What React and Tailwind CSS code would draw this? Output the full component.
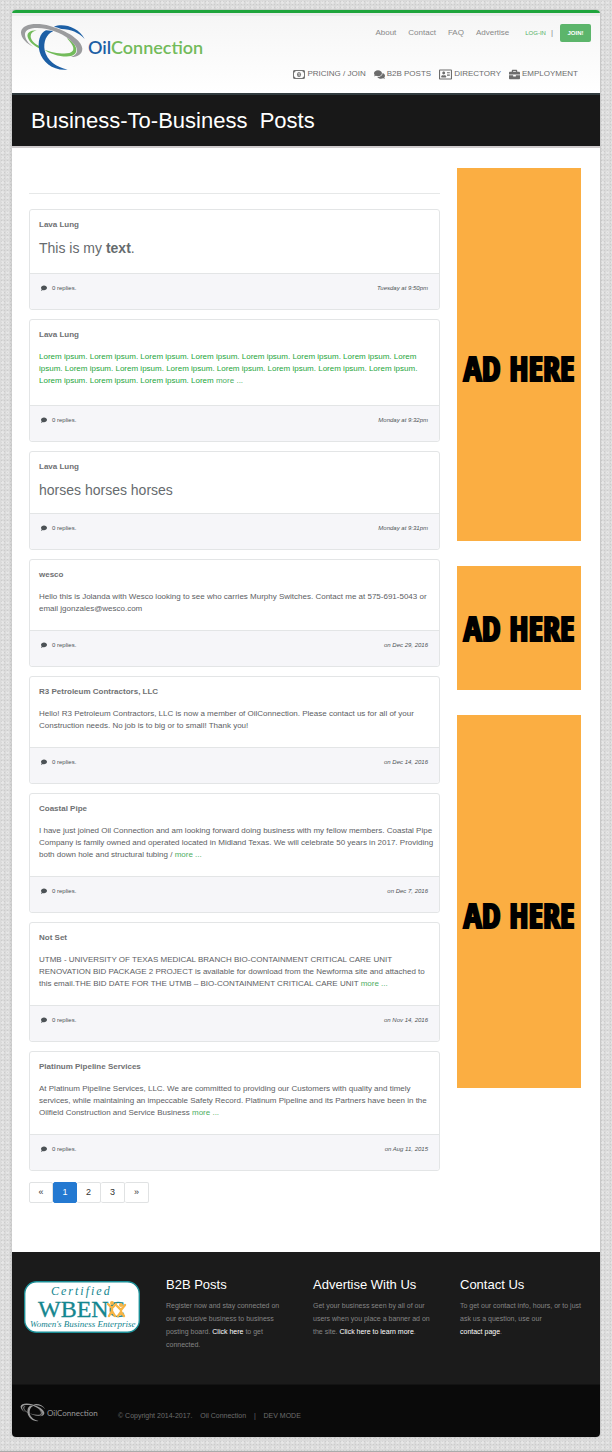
import React from "react";
import { FaComments, FaComment, FaBriefcase, FaRegAddressCard } from "react-icons/fa";

const cardText = "mt-[10px] text-[8px] leading-[12px]";

const posts = [
  { name: "Lava Lung", large: true, pad: "pb-4", date: "Tuesday at 9:50pm", body: <>This is my <b>text</b>.</> },
  {
    name: "Lava Lung", green: true, pad: "pb-[18px]", date: "Monday at 9:32pm", more: true,
    body: "Lorem ipsum. ".repeat(18) + "Lorem ",
  },
  { name: "Lava Lung", large: true, pad: "pb-[14px]", date: "Monday at 9:31pm", body: "horses horses horses" },
  { name: "wesco", date: "on Dec 29, 2016", body: "Hello this is Jolanda with Wesco looking to see who carries Murphy Switches. Contact me at 575-691-5043 or email jgonzales@wesco.com" },
  { name: "R3 Petroleum Contractors, LLC", date: "on Dec 14, 2016", body: "Hello! R3 Petroleum Contractors, LLC is now a member of OilConnection. Please contact us for all of your Construction needs. No job is to big or to small! Thank you!" },
  { name: "Coastal Pipe", date: "on Dec 7, 2016", more: true, body: "I have just joined Oil Connection and am looking forward doing business with my fellow members. Coastal Pipe Company is family owned and operated located in Midland Texas. We will celebrate 50 years in 2017. Providing both down hole and structural tubing / " },
  { name: "Not Set", date: "on Nov 14, 2016", more: true, body: "UTMB - UNIVERSITY OF TEXAS MEDICAL BRANCH BIO-CONTAINMENT CRITICAL CARE UNIT RENOVATION BID PACKAGE 2 PROJECT is available for download from the Newforma site and attached to this email.THE BID DATE FOR THE UTMB – BIO-CONTAINMENT CRITICAL CARE UNIT " },
  { name: "Platinum Pipeline Services", date: "on Aug 11, 2015", more: true, body: "At Platinum Pipeline Services, LLC. We are committed to providing our Customers with quality and timely services, while maintaining an impeccable Safety Record. Platinum Pipeline and its Partners have been in the Oilfield Construction and Service Business " },
];

function Swoosh({ blue, green, gray, className }) {
  return (
    <svg viewBox="60 68 198 147" className={className} aria-hidden="true">
      <path fill={green} d="M110 90C88 90 78 100 84 113C90 128 105 138 120 145L118 137C102 130 92 118 92 108C92 98 98 93 110 90Z" />
      <path fill={green} d="M134 148C150 162 190 172 213 167C240 160 232 130 200 113C222 135 228 152 208 158C190 162 155 157 134 148Z" />
      <path fill={gray} d="M100 139C80 130 62 112 63 95C66 70 110 66 150 77C200 90 246 120 247 145C247 160 235 170 213 170C232 163 236 150 225 135C205 108 170 92 140 86C110 80 78 82 75 100C74 115 84 130 100 139Z" />
      <path fill={blue} d="M138 90C120 97 111 125 119 155C128 185 160 213 203 208C170 202 140 180 134 150C130 125 138 102 160 92Z" />
      <path fill={blue} d="M162 79C190 68 235 80 254 116C235 95 212 88 185 86C178 84 170 80 162 79Z" />
    </svg>
  );
}

function MoneyIcon() {
  return (
    <svg viewBox="0 0 24 18" className="h-[9px] w-3" aria-hidden="true">
      <rect x="1" y="1" width="22" height="16" rx="1" fill="none" stroke="#777" strokeWidth="2" />
      <path fill="#777" d="M2 2h3a3 3 0 0 1-3 3zM22 2h-3a3 3 0 0 0 3 3zM2 16h3a3 3 0 0 0-3-3zM22 16h-3a3 3 0 0 1 3-3z" />
      <ellipse cx="12" cy="9" rx="4" ry="5" fill="#777" />
      <path d="M12.3 6v6M11 7.2l1.3-.9" stroke="#fff" strokeWidth="1.3" fill="none" />
    </svg>
  );
}

function Wbenc() {
  return (
    <svg viewBox="0 0 116 52" className="h-[52px] w-[116px]" role="img" aria-label="Certified WBENC Women's Business Enterprise">
      <rect x="0.7" y="0.7" width="114.6" height="50.6" rx="12" fill="#fff" stroke="#1b8e96" strokeWidth="1.4" />
      <g fill="#14868f" fontFamily="'Liberation Serif', serif">
        <text x="27" y="14" fontSize="12" fontStyle="italic" letterSpacing="2">Certified</text>
        <text x="14" y="36" fontSize="24" stroke="#14868f" strokeWidth="0.3">WBENC</text>
        <text x="6" y="46" fontSize="9" fontStyle="italic">Women's Business Enterprise</text>
      </g>
      <g stroke="#f7b445" strokeWidth="2.4" fill="none" strokeLinecap="round">
        <path d="M84 23l4 4 4-4M88 27v3l-3 5M88 30l3 5" />
        <path d="M93 25l4 4 4-5M97 29v2l-3 4M97 31l3 4" />
      </g>
      <circle cx="88" cy="22" r="2" fill="#f7b445" />
      <circle cx="97" cy="24" r="2" fill="#f7b445" />
    </svg>
  );
}

function Post({ post }) {
  return (
    <article className="rounded-[3px] border border-[#e3e5e6] bg-white">
      <div className={`pt-[9px] pr-1 pl-[9px] ${post.pad || "pb-[15px]"}`}>
        <h2 className="text-[8px] leading-[12px] font-bold text-[#6f7173]">{post.name}</h2>
        <p className={post.large ? "mt-2 text-[14px] leading-[18px] text-[#666b6e]" : post.green ? `${cardText} text-[#1da53a]` : `${cardText} text-[#5c6063]`}>
          {post.body}
          {post.more && <a href="#more" className="text-[#4cae61]">more ...</a>}
        </p>
      </div>
      <div className="flex justify-between rounded-b-[3px] border-t border-[#e3e5e6] bg-[#f6f6f9] px-[11px] pt-2 pb-[15px] text-[6px] leading-[12px] text-[#4c5256]">
        <span className="flex items-center gap-[5px]">
          <FaComment className="h-[6px] w-[6px]" /> 0 replies.
        </span>
        <time className="italic">{post.date}</time>
      </div>
    </article>
  );
}

function Ad({ tall }) {
  return (
    <a href="#ad" className={`flex items-center justify-center bg-[#fbae42] font-['Open_Sans_Condensed','Roboto_Condensed',sans-serif] text-[34px] font-black whitespace-nowrap text-black [-webkit-text-stroke:2px_black] ${tall ? "h-[373px] pt-[28px]" : "h-[124px]"}`}>
      AD HERE
    </a>
  );
}

const pages = ["«", "1", "2", "3", "»"];

export default function App() {
  return (
    <div className="border-b border-[#aaa] bg-[#dadada] bg-[radial-gradient(#00000012_1px,transparent_1px),radial-gradient(#ffffff55_1px,transparent_2px)] bg-size-[3px_3px,5px_5px] px-3 pt-[10px] pb-[14px] font-['Liberation_Sans',sans-serif]">
      <div className="overflow-hidden rounded-[4px] bg-white shadow-[0_0_2px_#0000004d]">
        <header className="flex min-h-[83px] justify-between border-t-[3px] border-[#1fa53c] bg-[linear-gradient(#ececec_3px,#f6f6f6_3px,#ffffff)]">
          <a href="#home" className="flex pt-[10px] pl-2" aria-label="OilConnection">
            <Swoosh blue="#1c5fa5" green="#73bb5b" gray="#9b9c9e" className="h-[49px] w-[66px]" />
            <span className="ml-[2px] pt-3 font-['Lato',sans-serif] text-[18px] leading-[24px] font-semibold text-[#73bb5b]"><span className="text-[#1c5fa5]">Oil</span>Connection</span>
          </a>
          <div className="flex flex-col items-end">
            <nav className="mt-[11px] mr-[9px] flex items-center text-[8px] leading-[18px] text-[#888]">
              <a href="#about" className="mr-3">About</a>
              <a href="#contact" className="mr-3">Contact</a>
              <a href="#faq" className="mr-3">FAQ</a>
              <a href="#advertise" className="mr-4">Advertise</a>
              <a href="#login" className="mr-[5px] text-[6px] text-[#52b063]">LOG-IN</a>
              <span className="mr-[7px]">|</span>
              <a href="#join" className="w-[31px] rounded-[2px] bg-[#5cb56b] text-center text-[6px] font-bold text-white">JOIN!</a>
            </nav>
            <nav className="mt-[23px] mr-[22px] flex gap-2 text-[8px] leading-[18px] text-[#6c6c6c]">
              <a href="#pricing" className="flex items-center gap-[2px]"><MoneyIcon />PRICING / JOIN</a>
              <a href="#posts" className="flex items-center gap-[2px]"><FaComments className="h-[11px] w-[11px]" />B2B POSTS</a>
              <a href="#directory" className="flex items-center gap-[2px]"><FaRegAddressCard className="h-[13px] w-[13px]" />DIRECTORY</a>
              <a href="#employment" className="flex items-center gap-[2px]"><FaBriefcase className="h-[11px] w-[11px]" />EMPLOYMENT</a>
            </nav>
          </div>
        </header>

        <div className="border-t-2 border-b-2 border-t-[#313b3f] border-b-[#cfcbcd] bg-[#181818] px-[19px] pt-[11px] pb-[11px]">
          <h1 className="text-[22px] leading-[29px] whitespace-pre text-white">Business-To-Business  Posts</h1>
        </div>

        <main className="flex gap-[17px] pr-[19px] pb-[49px] pl-[17px]">
          <section className="min-w-0 flex-1 pt-[45px]">
            <hr className="mb-[15px] border-[#e6e8e8]" />
            <div className="flex flex-col gap-[9px]">
              {posts.map((p, i) => <Post key={i} post={p} />)}
            </div>
            <nav aria-label="Pages" className="mt-[11px] flex text-[9px] leading-[19px] text-[#333]">
              {pages.map((p) => (
                <a key={p} href={`#page-${p}`} className={p === "1" ? "w-6 rounded-[2px] border border-[#2479d1] bg-[#2479d1] text-center text-white" : "w-6 rounded-[2px] border border-l-0 border-[#e0e2e3] text-center first:border-l"}>{p}</a>
              ))}
            </nav>
          </section>
          <aside className="flex w-[124px] flex-col gap-[25px] pt-5">
            <Ad tall />
            <Ad />
            <Ad tall />
          </aside>
        </main>

        <footer>
          <div className="grid grid-cols-4 bg-[#1b1b1b] pt-6 pb-8 text-[7px] leading-[13px] text-[#858585]">
            <div className="pt-[5px] pl-3"><Wbenc /></div>
            <div className="pl-[7px]">
              <h2 className="mb-[6px] text-[13px] leading-[17px] text-white">B2B Posts</h2>
              <p className="max-w-[124px] pb-px">Register now and stay connected on our exclusive business to business posting board. <a href="#posts" className="text-white">Click here</a> to get connected.</p>
            </div>
            <div className="pl-[7px]">
              <h2 className="mb-[6px] text-[13px] leading-[17px] text-white">Advertise With Us</h2>
              <p className="max-w-[124px]">Get your business seen by all of our users when you place a banner ad on the site. <a href="#advertise" className="text-white">Click here to learn more</a>.</p>
            </div>
            <div className="pl-[7px]">
              <h2 className="mb-[6px] text-[13px] leading-[17px] text-white">Contact Us</h2>
              <p className="max-w-[124px]">To get our contact info, hours, or to just ask us a question, use our<br /><a href="#contact" className="text-white">contact page</a>.</p>
            </div>
          </div>
          <div className="flex border-t border-[#131313] bg-[#0a0a0a] pb-[15px] pl-2 text-[7px] leading-[12px] text-[#6c6c6c]">
            <a href="#home" className="flex w-[98px] pt-[18px] text-[8px] text-[#999]" aria-label="OilConnection">
              <Swoosh blue="#999" green="#777" gray="#999" className="h-[19px] w-[26px]" />
              <span className="ml-px pt-[4px] font-['Lato',sans-serif]">OilConnection</span>
            </a>
            <p className="pt-[25px] whitespace-pre">© Copyright 2014-2017.    Oil Connection    |    DEV MODE</p>
          </div>
        </footer>
      </div>
    </div>
  );
}
